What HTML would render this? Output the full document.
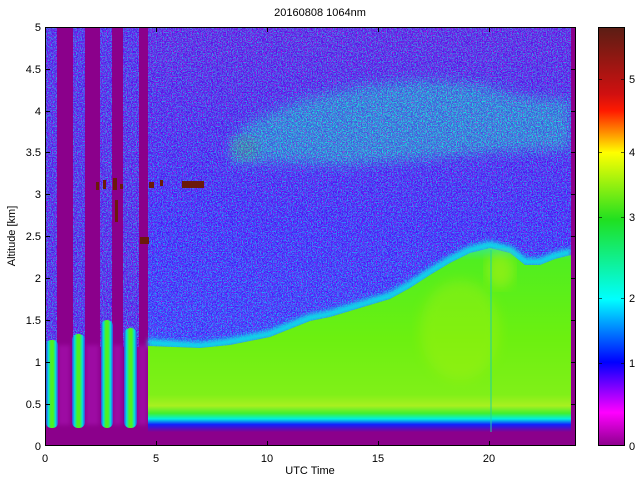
<!DOCTYPE html>
<html><head><meta charset="utf-8"><style>
html,body{margin:0;padding:0;background:#fff;}
svg{display:block;font-family:"Liberation Sans",sans-serif;}
</style></head><body>
<svg width="640" height="480" viewBox="0 0 640 480" xmlns="http://www.w3.org/2000/svg">
<defs>
<filter id="nz" x="0" y="0" width="100%" height="100%">
<feTurbulence type="fractalNoise" baseFrequency="0.8" numOctaves="1" seed="4" result="t"/>
<feColorMatrix in="t" type="matrix" values="1 0 0 0 0  1 0 0 0 0  1 0 0 0 0  0 0 0 0 1"/>
<feComponentTransfer>
<feFuncR type="discrete" tableValues="0.55 1 0.1 0.1 0 0.55"/>
<feFuncG type="discrete" tableValues="0 0 0 0.2 0.9 0"/>
<feFuncB type="discrete" tableValues="0.55 1 1 1 1 0.55"/>
</feComponentTransfer>
</filter>
<filter id="bl"><feGaussianBlur stdDeviation="6"/></filter>
<filter id="bl2"><feGaussianBlur stdDeviation="2"/></filter>
<linearGradient id="up" x1="0" y1="0" x2="0" y2="1">
<stop offset="0" stop-color="#6a2cbc"/>
<stop offset="0.3" stop-color="#5030d0"/>
<stop offset="0.6" stop-color="#3838e8"/>
<stop offset="1" stop-color="#2a60f0"/>
</linearGradient>
<linearGradient id="gr" x1="0" y1="245" x2="0" y2="432" gradientUnits="userSpaceOnUse">
<stop offset="0" stop-color="#30e8a0"/>
<stop offset="0.08" stop-color="#50ee20"/>
<stop offset="0.5" stop-color="#6cf010"/>
<stop offset="0.8" stop-color="#80f018"/>
<stop offset="0.86" stop-color="#a8f020"/>
<stop offset="0.9" stop-color="#40f030"/>
<stop offset="0.93" stop-color="#00f0e0"/>
<stop offset="0.96" stop-color="#1020ff"/>
<stop offset="1" stop-color="#8b008b"/>
</linearGradient>
<linearGradient id="col" x1="0" y1="0" x2="1" y2="0">
<stop offset="0" stop-color="#4040e0"/>
<stop offset="0.2" stop-color="#00e0e0"/>
<stop offset="0.4" stop-color="#50f020"/>
<stop offset="0.6" stop-color="#50f020"/>
<stop offset="0.8" stop-color="#00e0e0"/>
<stop offset="1" stop-color="#4040e0"/>
</linearGradient>
<linearGradient id="cb" x1="0" y1="0" x2="0" y2="1">
<stop offset="0" stop-color="#5a1e14"/>
<stop offset="0.16" stop-color="#d01010"/>
<stop offset="0.2" stop-color="#ff1a00"/>
<stop offset="0.25" stop-color="#ff8a00"/>
<stop offset="0.3" stop-color="#ffff00"/>
<stop offset="0.46" stop-color="#20e020"/>
<stop offset="0.65" stop-color="#00ffff"/>
<stop offset="0.8" stop-color="#0000ff"/>
<stop offset="0.92" stop-color="#ff00ff"/>
<stop offset="1" stop-color="#8b008b"/>
</linearGradient>
<clipPath id="upc"><polygon points="148,27 571,27 571,252 555,256 540,262 525,262 510,250 490,245 470,250 450,260 430,272 410,285 390,296 370,302 350,308 330,314 310,318 290,326 270,334 250,338 230,342 200,346 148,343"/></clipPath>
<clipPath id="colc"><rect x="46" y="27" width="11" height="400"/><rect x="73" y="27" width="12" height="400"/><rect x="100" y="27" width="12" height="400"/><rect x="123" y="27" width="16" height="400"/><rect x="148" y="27" width="423" height="320"/></clipPath>
</defs>

<rect x="45" y="27" width="531" height="419" fill="#8b008b"/>
<rect x="46" y="27" width="11" height="320" fill="#5836c8"/>
<rect x="73" y="27" width="12" height="320" fill="#5836c8"/>
<rect x="100" y="27" width="12" height="300" fill="#5836c8"/>
<rect x="123" y="27" width="16" height="310" fill="#5836c8"/>
<g clip-path="url(#upc)">
<rect x="148" y="27" width="423" height="330" fill="url(#up)"/>
<polygon points="232,140 250,122 300,100 360,86 420,80 480,84 520,96 571,100 571,150 500,152 420,160 340,166 280,162 232,164" fill="#18e0a8" filter="url(#bl)"/>
<ellipse cx="245" cy="148" rx="14" ry="12" fill="#30e050" filter="url(#bl)"/>
</g>
<rect x="45" y="27" width="527" height="320" fill="#fff" filter="url(#nz)" clip-path="url(#colc)" opacity="0.6"/>
<polyline points="148,343 200,346 230,342 250,338 270,334 290,326 310,318 330,314 350,308 370,302 390,296 410,285 430,272 450,260 470,250 490,245 510,250 525,262 540,262 555,256 571,252" fill="none" stroke="#10d8e8" stroke-width="8" filter="url(#bl2)"/>
<polygon points="148,432 148,346 200,348 230,345 250,341 270,337 290,329 310,321 330,317 350,311 370,305 390,299 410,288 430,275 450,263 470,253 490,248 510,253 525,265 540,265 555,259 571,255 571,432" fill="url(#gr)"/>
<ellipse cx="460" cy="330" rx="40" ry="50" fill="#b0f010" opacity="0.35" filter="url(#bl)"/>
<ellipse cx="500" cy="270" rx="14" ry="18" fill="#c8f010" opacity="0.45" filter="url(#bl)"/>
<line x1="491" y1="250" x2="491" y2="432" stroke="#20d0a0" stroke-width="1"/>
<g>
<rect x="46" y="340" width="12" height="88" rx="5" fill="url(#col)"/>
<rect x="72" y="334" width="13" height="94" rx="6" fill="url(#col)"/>
<rect x="101" y="320" width="12" height="108" rx="6" fill="url(#col)"/>
<rect x="124" y="328" width="13" height="100" rx="6" fill="url(#col)"/>
</g>
<rect x="58" y="345" width="12" height="80" fill="#c020d0" opacity="0.35" filter="url(#bl2)"/>
<rect x="86" y="345" width="13" height="80" fill="#c020d0" opacity="0.35" filter="url(#bl2)"/>
<rect x="113" y="345" width="9" height="80" fill="#c020d0" opacity="0.35" filter="url(#bl2)"/>
<rect x="138" y="345" width="9" height="80" fill="#c020d0" opacity="0.35" filter="url(#bl2)"/>
<rect x="45" y="432" width="526" height="14" fill="#8b008b"/>
<rect x="571" y="27" width="5" height="419" fill="#8b008b"/>
<g fill="#6b1a0a">
<rect x="96" y="182" width="3" height="8"/><rect x="103" y="180" width="3" height="9"/>
<rect x="113" y="178" width="4" height="12"/><rect x="120" y="184" width="3" height="5"/>
<rect x="115" y="200" width="3" height="22"/>
<rect x="149" y="182" width="5" height="6"/><rect x="160" y="180" width="3" height="6"/>
<rect x="182" y="181" width="22" height="7"/>
<rect x="140" y="237" width="9" height="7"/>
</g>
<rect x="45.5" y="27.5" width="530" height="418" fill="none" stroke="#000" stroke-width="1"/>
<g stroke="#000" stroke-width="1">
<line x1="156.5" y1="446" x2="156.5" y2="441"/><line x1="267.5" y1="446" x2="267.5" y2="441"/><line x1="378.5" y1="446" x2="378.5" y2="441"/><line x1="489.5" y1="446" x2="489.5" y2="441"/>
<line x1="156.5" y1="27" x2="156.5" y2="32"/><line x1="267.5" y1="27" x2="267.5" y2="32"/><line x1="378.5" y1="27" x2="378.5" y2="32"/><line x1="489.5" y1="27" x2="489.5" y2="32"/>
<line x1="45" y1="404.5" x2="50" y2="404.5"/><line x1="45" y1="362.5" x2="50" y2="362.5"/><line x1="45" y1="320.5" x2="50" y2="320.5"/><line x1="45" y1="278.5" x2="50" y2="278.5"/><line x1="45" y1="236.5" x2="50" y2="236.5"/><line x1="45" y1="194.5" x2="50" y2="194.5"/><line x1="45" y1="152.5" x2="50" y2="152.5"/><line x1="45" y1="111.5" x2="50" y2="111.5"/><line x1="45" y1="69.5" x2="50" y2="69.5"/>
<line x1="576" y1="404.5" x2="571" y2="404.5"/><line x1="576" y1="362.5" x2="571" y2="362.5"/><line x1="576" y1="320.5" x2="571" y2="320.5"/><line x1="576" y1="278.5" x2="571" y2="278.5"/><line x1="576" y1="236.5" x2="571" y2="236.5"/><line x1="576" y1="194.5" x2="571" y2="194.5"/><line x1="576" y1="152.5" x2="571" y2="152.5"/><line x1="576" y1="111.5" x2="571" y2="111.5"/><line x1="576" y1="69.5" x2="571" y2="69.5"/>
</g>
<g font-size="11" fill="#000">
<text x="320" y="16" text-anchor="middle">20160808 1064nm</text>
<text x="310" y="474" text-anchor="middle">UTC Time</text>
<text transform="translate(15,236) rotate(-90)" text-anchor="middle">Altitude [km]</text>
<text x="45" y="462" text-anchor="middle">0</text><text x="156" y="462" text-anchor="middle">5</text><text x="267" y="462" text-anchor="middle">10</text><text x="378" y="462" text-anchor="middle">15</text><text x="489" y="462" text-anchor="middle">20</text>
<g text-anchor="end">
<text x="41" y="450">0</text><text x="41" y="408">0.5</text><text x="41" y="366">1</text><text x="41" y="324">1.5</text><text x="41" y="282">2</text><text x="41" y="240">2.5</text><text x="41" y="198">3</text><text x="41" y="156">3.5</text><text x="41" y="115">4</text><text x="41" y="73">4.5</text><text x="41" y="31">5</text>
</g>
<text x="629" y="450">0</text><text x="629" y="367">1</text><text x="629" y="302">2</text><text x="629" y="221">3</text><text x="629" y="156">4</text><text x="629" y="83">5</text>
</g>
<rect x="598" y="27" width="27" height="419" fill="url(#cb)"/>
<rect x="598.5" y="27.5" width="26" height="418" fill="none" stroke="#000"/>
<g stroke="#000" opacity="0.6">
<line x1="598" y1="363.5" x2="602" y2="363.5"/><line x1="621" y1="363.5" x2="625" y2="363.5"/>
<line x1="598" y1="298.5" x2="602" y2="298.5"/><line x1="621" y1="298.5" x2="625" y2="298.5"/>
<line x1="598" y1="217.5" x2="602" y2="217.5"/><line x1="621" y1="217.5" x2="625" y2="217.5"/>
<line x1="598" y1="152.5" x2="602" y2="152.5"/><line x1="621" y1="152.5" x2="625" y2="152.5"/>
<line x1="598" y1="79.5" x2="602" y2="79.5"/><line x1="621" y1="79.5" x2="625" y2="79.5"/>
</g>
</svg>
</body></html>
